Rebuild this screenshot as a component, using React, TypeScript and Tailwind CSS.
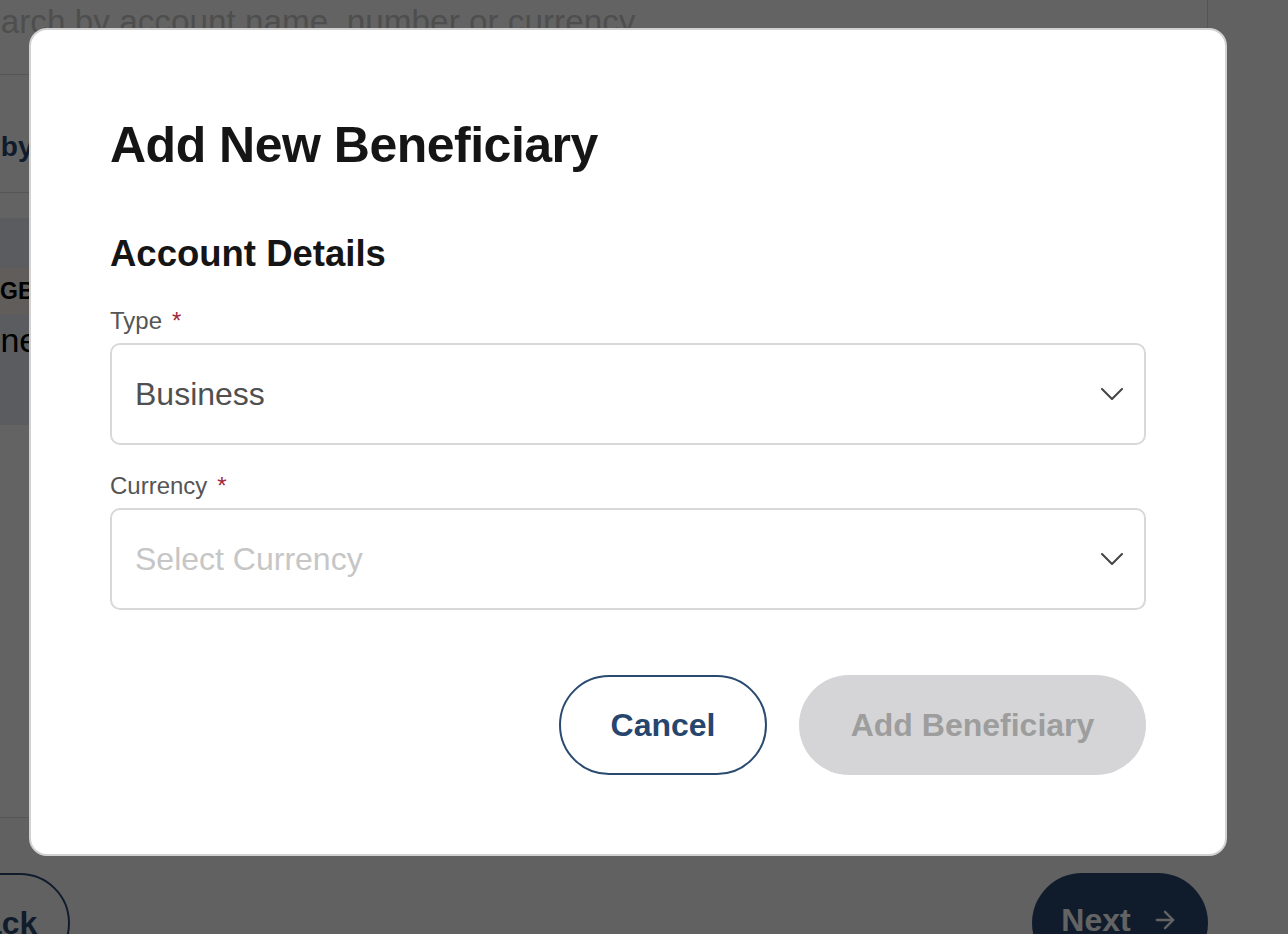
import { ArrowRight } from 'lucide-react';

function Chevron() {
  return (
    <svg width="22" height="12" viewBox="0 0 22 12" fill="none" className="shrink-0">
      <path d="M1 1l10 10L21 1" stroke="#444" strokeWidth="2" strokeLinecap="round" strokeLinejoin="round" />
    </svg>
  );
}

function SelectField({ label, value, placeholder }: { label: string; value?: string; placeholder?: string }) {
  return (
    <div className="flex flex-col">
      <div className="flex items-start text-[24px] leading-[24px] text-[#555]">
        <span>{label}</span>
        <span className="ml-[10px] text-[#a3263a]">*</span>
      </div>
      <button
        type="button"
        className="mt-[10px] flex h-[102px] w-full items-center justify-between rounded-[10px] border-2 border-[#d8d8d8] bg-white pl-[23px] pr-[21px] text-left"
      >
        <span className={value ? 'text-[32px] leading-[32px] text-[#505050]' : 'text-[32px] leading-[32px] text-[#c6c6c6]'}>
          {value ?? placeholder}
        </span>
        <Chevron />
      </button>
    </div>
  );
}

export default function App() {
  return (
    <div
      className="relative h-[934px] w-[1288px] overflow-hidden bg-[#fafafa]"
      style={{ fontFamily: '"Liberation Sans", Arial, sans-serif' }}
    >
      {/* page underneath */}
      <div className="ml-[-63px] flex h-[818px] w-[1271px] flex-col border-r border-b border-[#dcdcdc] bg-white">
        <div className="h-[75px] whitespace-nowrap border-b border-[#dbdbdb] pl-[23px] pt-[3px] text-[33.3px] leading-[37px] text-[#c9c9c9]">
          Search by account name, number or currency
        </div>
        <div className="h-[118px] whitespace-nowrap border-b border-[#dbdbdb] pt-[58px] text-[28px] font-bold leading-[28px] text-[#2b4a73]">
          Sort by
        </div>
        <div className="mt-[25px] h-[50px] bg-[#e8eef6]" />
        <div className="flex h-[47px] items-center whitespace-nowrap bg-[#f6f0ea] pl-[63px] text-[23px] font-bold text-black">
          GBP Account
        </div>
        <div className="h-[110px] whitespace-nowrap bg-[#e8eef6] pl-[3px] pt-[8px] text-[34px] leading-[34px] text-black">
          Online
        </div>
      </div>
      <div className="ml-[-72px] mt-[55px] flex w-[1280px] items-start justify-between">
        <button
          type="button"
          className="h-[100px] w-[142px] rounded-full border-2 border-[#2b4a73] text-[32px] font-bold text-[#2b4a73]"
        >
          Back
        </button>
        <button
          type="button"
          className="flex h-[100px] w-[176px] items-center justify-center gap-[20px] rounded-full bg-[#2b4a73] pb-[6px] text-[32px] font-bold text-white"
        >
          Next
          <ArrowRight size={28} strokeWidth={2} />
        </button>
      </div>

      {/* overlay */}
      <div className="absolute inset-0 bg-black/[0.61]" />

      {/* modal */}
      <div className="absolute left-[29px] top-[28px] w-[1198px] rounded-[18px] border-2 border-[#d2d2d2] bg-white px-[79px] pb-[79px] pt-[90px]">
        <h1 className="text-[50px] font-bold leading-[50px] tracking-[-0.5px] text-[#151515]">Add New Beneficiary</h1>
        <h2 className="mt-[66px] text-[36.5px] font-bold leading-[36px] text-[#151515]">Account Details</h2>
        <div className="mt-[37px]">
          <SelectField label="Type" value="Business" />
        </div>
        <div className="mt-[29px]">
          <SelectField label="Currency" placeholder="Select Currency" />
        </div>
        <div className="mt-[65px] flex justify-end gap-[32px]">
          <button
            type="button"
            className="h-[100px] w-[208px] rounded-full border-2 border-[#2a4a70] bg-white text-[32px] font-bold text-[#27466d]"
          >
            Cancel
          </button>
          <button
            type="button"
            disabled
            className="h-[100px] w-[347px] rounded-full bg-[#d5d5d7] text-[32px] font-bold text-[#9d9d9d]"
          >
            Add Beneficiary
          </button>
        </div>
      </div>
    </div>
  );
}
